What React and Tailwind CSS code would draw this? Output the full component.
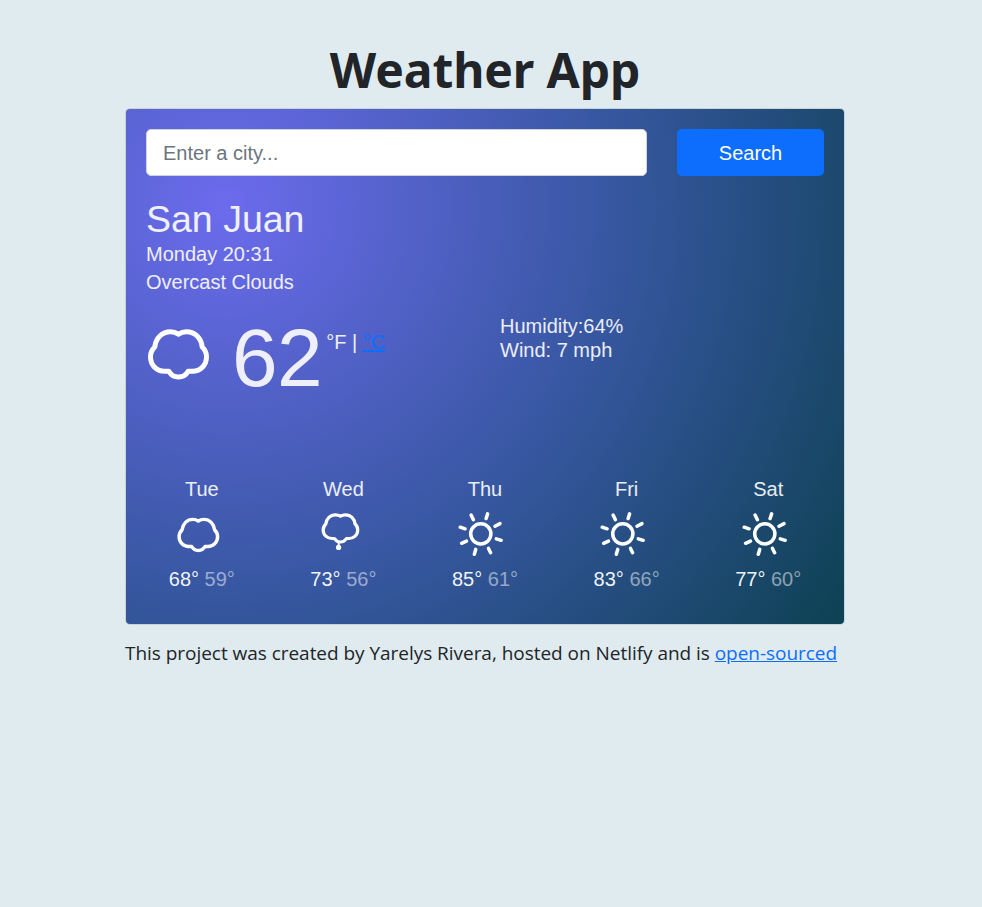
import React from "react";

const CLOUD =
  "M32.5 13.2 Q29 10.7 24.5 10.7 C16 10.7 9.8 17.2 8.8 26 C6 28.6 4.5 32 4.5 36 C4.5 44.4 11 50.4 19 50.2 L22.8 50.2 C25 54 28.4 56 32.5 56 C36.6 56 40 54 42.2 50.2 L46 50.2 C54 50.4 60.5 44.4 60.5 36 C60.5 32 59 28.6 56.2 26 C55.2 17.2 49 10.7 40.5 10.7 Q36 10.7 32.5 13.2 Z";

function Cloud({ className, strokeWidth }) {
  return (
    <svg viewBox="0 0 64 64" className={className} fill="none" stroke="#fff" strokeWidth={strokeWidth} strokeLinejoin="round">
      <path d={CLOUD} />
    </svg>
  );
}

function Drizzle() {
  return (
    <svg viewBox="0 0 44 44" className="size-11 overflow-visible" fill="none" stroke="#fff" strokeLinejoin="round">
      <path transform="translate(2.4 -3.6) scale(0.617 0.6)" strokeWidth="5.2" d={CLOUD} />
      <path strokeWidth="2" d="M20.7 30.5V35" />
      <circle cx="20.6" cy="35.4" r="2.6" fill="#fff" stroke="none" />
    </svg>
  );
}

function Sun() {
  return (
    <svg viewBox="0 0 44 44" className="size-11 overflow-visible" fill="none" stroke="#fff" strokeWidth="3.5" strokeLinecap="round">
      <circle cx="21.8" cy="21.8" r="10.1" />
      <g strokeWidth="3.5">
        <path d="M27.1 6.5L28.6 1.9M36 14.2L41 11.6M37.3 26.8L42.2 28.3M29.5 36.4L31.6 40.7M16.7 37.4L15.3 42.2M7.5 29.1L2.6 31.3M6.1 16.8L1.2 15.2M14.4 7.7L12.1 3" />
      </g>
    </svg>
  );
}

const DAYS = [
  { day: "Tue", icon: <Cloud className="size-11 overflow-visible" strokeWidth={5} />, high: 68, low: 59 },
  { day: "Wed", icon: <Drizzle />, high: 73, low: 56 },
  { day: "Thu", icon: <Sun />, high: 85, low: 61 },
  { day: "Fri", icon: <Sun />, high: 83, low: 66 },
  { day: "Sat", icon: <Sun />, high: 77, low: 60 },
];

export default function App() {
  return (
    <div className="min-h-screen bg-[#e0ebef] pt-[41px] font-['Liberation_Sans',Arial,sans-serif] text-xl text-[#212529]">
      <main className="ml-[125px] w-[720px]">
        <h1 className="h-[67px] whitespace-nowrap text-center font-['Noto_Sans',sans-serif] text-[48px] leading-[58px] font-bold tracking-[-0.1px]">
          Weather App
        </h1>
        <section className="h-[517px] rounded-[5px] border border-black/10 bg-[radial-gradient(circle_at_13.8%_18.6%,rgb(108,107,237)_0%,rgb(55,87,161)_52%,rgb(13,65,82)_100%)] bg-clip-padding px-5 pt-5 text-white/90">
          <form className="flex gap-[30px]" onSubmit={(e) => e.preventDefault()}>
            <input
              className="h-[47px] w-[501px] rounded-[5px] border border-[#ced4da] bg-white px-4 pt-0.5 text-xl text-[#212529] placeholder:text-[#6c757d]"
              placeholder="Enter a city..."
            />
            <button className="h-[47px] w-[147px] rounded-[5px] bg-[#0d6efd] text-white">Search</button>
          </form>
          <h2 className="mt-5 text-[37.5px] leading-[46px]">San Juan</h2>
          <p className="-mt-[2px] leading-7">Monday 20:31</p>
          <p className="leading-7">Overcast Clouds</p>
          <div className="mt-[18px] flex h-[160px]">
            <div className="flex w-[354px]">
              <Cloud className="mt-[7px] size-16 shrink-0" strokeWidth={5} />
              <span className="ml-[22px] text-[82px] leading-[87px] tracking-[-0.5px]">62</span>
              <span className="mt-[13px] ml-1 leading-[30px] whitespace-nowrap">
                °F | <a className="text-[#0d6efd] underline">°C</a>
              </span>
            </div>
            <div className="leading-6">
              <p>Humidity:64%</p>
              <p>Wind: 7 mph</p>
            </div>
          </div>
          <div className="-mx-[15px] grid grid-cols-5 text-center">
            {DAYS.map(({ day, icon, high, low }) => (
              <div key={day} className="flex flex-col items-center">
                <p className="leading-[30px]">{day}</p>
                <div className="mt-2 mr-[7px]">{icon}</div>
                <p className="mt-2 leading-[30px] text-white/95">
                  {high}° <span className="text-white/50">{low}°</span>
                </p>
              </div>
            ))}
          </div>
        </section>
        <footer className="mt-[13px] whitespace-nowrap font-['Open_Sans','Noto_Sans',sans-serif] text-[19px] leading-[30px] tracking-[-0.035px]">
          This project was created by Yarelys Rivera, hosted on Netlify and is{" "}
          <a className="text-[#0d6efd] underline">open-sourced</a>
        </footer>
      </main>
    </div>
  );
}
